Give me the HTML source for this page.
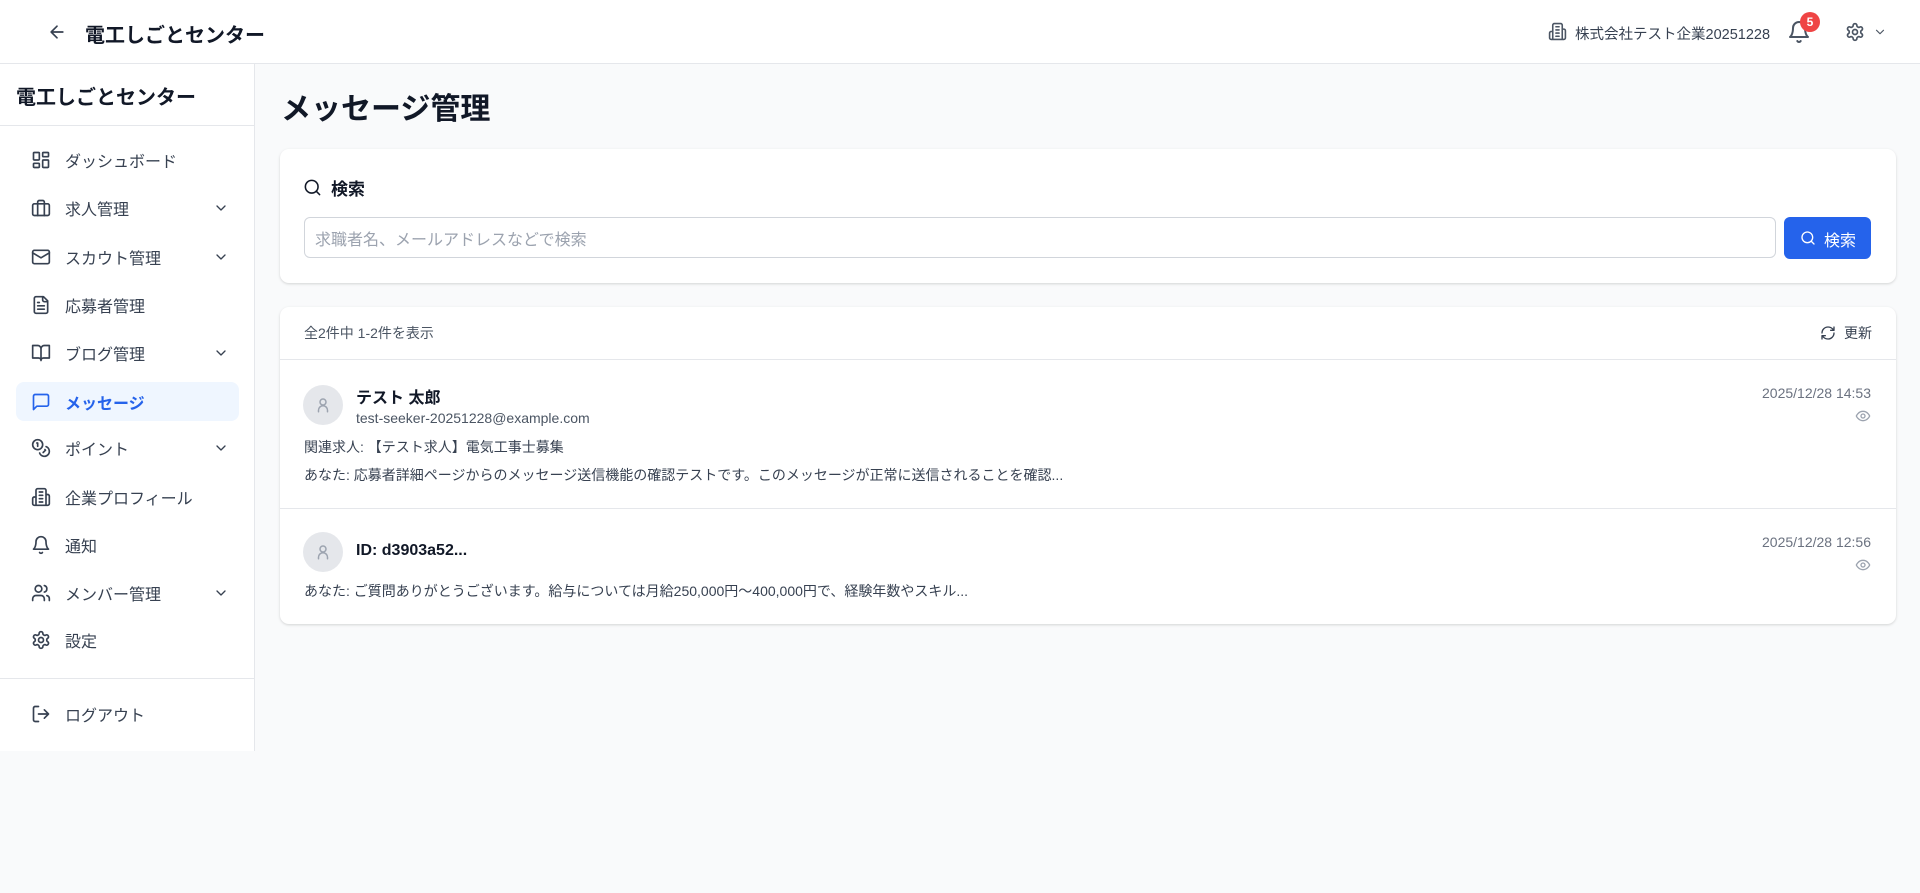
<!DOCTYPE html>
<html><head><meta charset="utf-8"><style>
*{box-sizing:border-box;margin:0;padding:0}
body{width:1920px;height:893px;background:#f9fafb;font-family:"Liberation Sans","Noto Sans CJK JP",sans-serif;color:#111827;position:relative;overflow:hidden}
.a{position:absolute}
svg{fill:none;stroke:currentColor;stroke-width:2;stroke-linecap:round;stroke-linejoin:round}
.hdr{left:0;top:0;width:1920px;height:64px;background:#fff;border-bottom:1px solid #e5e7eb}
.side{left:0;top:64px;width:255px;height:687px;background:#fff;border-right:1px solid #e5e7eb}
.nav{left:16px;width:223px;height:39px;display:flex;align-items:center;font-size:16px;color:#374151;border-radius:8px}
.nav svg{position:absolute;left:15px;width:20px;height:20px;color:#374151}
.nav span{position:absolute;left:49px}
.nav .ch{left:auto;right:10px;width:16px;height:16px}
.card{background:#fff;border-radius:9px;box-shadow:0 1px 3px rgba(0,0,0,.1),0 1px 2px rgba(0,0,0,.06)}
.av{width:40px;height:40px;border-radius:50%;background:#e5e7eb;display:flex;align-items:center;justify-content:center;color:#9ca3af}
.t14{font-size:14px;color:#374151;white-space:nowrap}
</style></head><body>
<div class="a hdr"></div>
<svg class="a" style="left:47px;top:22px;width:20px;height:20px;color:#374151" viewBox="0 0 24 24"><path d="M19 12H5M12 19l-7-7 7-7"/></svg>
<div class="a" style="left:85px;top:19px;font-size:20px;font-weight:700">電工しごとセンター</div>
<svg class="a" style="left:1548px;top:22px;width:19px;height:19px;color:#4b5563" viewBox="0 0 24 24"><path d="M6 22V4a2 2 0 0 1 2-2h8a2 2 0 0 1 2 2v18ZM6 12H4a2 2 0 0 0-2 2v6a2 2 0 0 0 2 2h2M18 9h2a2 2 0 0 1 2 2v9a2 2 0 0 1-2 2h-2M10 6h4M10 10h4M10 14h4M10 18h4"/></svg>
<div class="a" style="left:1575px;top:23px;font-size:14.5px;color:#374151">株式会社テスト企業20251228</div>
<svg class="a" style="left:1787px;top:20px;width:24px;height:24px;color:#4b5563" viewBox="0 0 24 24"><path d="M6 8a6 6 0 0 1 12 0c0 7 3 9 3 9H3s3-2 3-9M10.3 21a1.94 1.94 0 0 0 3.4 0"/></svg>
<div class="a" style="left:1800px;top:12px;width:20px;height:20px;border-radius:50%;background:#ef4444;color:#fff;font-size:12px;font-weight:700;text-align:center;line-height:20px">5</div>
<svg class="a" style="left:1845px;top:22px;width:20px;height:20px;color:#4b5563" viewBox="0 0 24 24"><path d="M12.22 2h-.44a2 2 0 0 0-2 2v.18a2 2 0 0 1-1 1.73l-.43.25a2 2 0 0 1-2 0l-.15-.08a2 2 0 0 0-2.73.73l-.22.38a2 2 0 0 0 .73 2.73l.15.1a2 2 0 0 1 1 1.72v.51a2 2 0 0 1-1 1.74l-.15.09a2 2 0 0 0-.73 2.73l.22.38a2 2 0 0 0 2.73.73l.15-.08a2 2 0 0 1 2 0l.43.25a2 2 0 0 1 1 1.73V20a2 2 0 0 0 2 2h.44a2 2 0 0 0 2-2v-.18a2 2 0 0 1 1-1.73l.43-.25a2 2 0 0 1 2 0l.15.08a2 2 0 0 0 2.73-.73l.22-.39a2 2 0 0 0-.73-2.73l-.15-.08a2 2 0 0 1-1-1.74v-.5a2 2 0 0 1 1-1.74l.15-.09a2 2 0 0 0 .73-2.73l-.22-.38a2 2 0 0 0-2.73-.73l-.15.08a2 2 0 0 1-2 0l-.43-.25a2 2 0 0 1-1-1.73V4a2 2 0 0 0-2-2z"/><circle cx="12" cy="12" r="3"/></svg>
<svg class="a" style="left:1873px;top:25px;width:14px;height:14px;color:#4b5563" viewBox="0 0 24 24"><path d="m6 9 6 6 6-6"/></svg>

<div class="a side"></div>
<div class="a" style="left:16px;top:81px;font-size:20px;font-weight:700">電工しごとセンター</div>
<div class="a" style="left:0;top:125px;width:255px;border-top:1px solid #e5e7eb"></div>

<div class="a nav" style="top:140px"><svg viewBox="0 0 24 24"><rect x="3" y="3" width="7" height="9" rx="1"/><rect x="14" y="3" width="7" height="5" rx="1"/><rect x="14" y="12" width="7" height="9" rx="1"/><rect x="3" y="16" width="7" height="5" rx="1"/></svg><span>ダッシュボード</span></div>
<div class="a nav" style="top:188px"><svg viewBox="0 0 24 24"><rect x="2" y="7" width="20" height="14" rx="2"/><path d="M16 21V5a2 2 0 0 0-2-2h-4a2 2 0 0 0-2 2v16"/></svg><span>求人管理</span><svg class="ch" viewBox="0 0 24 24"><path d="m6 9 6 6 6-6"/></svg></div>
<div class="a nav" style="top:237px"><svg viewBox="0 0 24 24"><rect x="2" y="4" width="20" height="16" rx="2"/><path d="m22 7-10 6L2 7"/></svg><span>スカウト管理</span><svg class="ch" viewBox="0 0 24 24"><path d="m6 9 6 6 6-6"/></svg></div>
<div class="a nav" style="top:285px"><svg viewBox="0 0 24 24"><path d="M15 2H6a2 2 0 0 0-2 2v16a2 2 0 0 0 2 2h12a2 2 0 0 0 2-2V7Z"/><path d="M14 2v4a2 2 0 0 0 2 2h4M10 9H8M16 13H8M16 17H8"/></svg><span>応募者管理</span></div>
<div class="a nav" style="top:333px"><svg viewBox="0 0 24 24"><path d="M2 3h6a4 4 0 0 1 4 4v14a3 3 0 0 0-3-3H2zM22 3h-6a4 4 0 0 0-4 4v14a3 3 0 0 1 3-3h7z"/></svg><span>ブログ管理</span><svg class="ch" viewBox="0 0 24 24"><path d="m6 9 6 6 6-6"/></svg></div>
<div class="a nav" style="top:382px;background:#eff6ff;color:#2563eb;font-weight:700"><svg viewBox="0 0 24 24" style="color:#2563eb"><path d="M21 15a2 2 0 0 1-2 2H7l-4 4V5a2 2 0 0 1 2-2h14a2 2 0 0 1 2 2z"/></svg><span>メッセージ</span></div>
<div class="a nav" style="top:428px"><svg viewBox="0 0 24 24"><circle cx="8" cy="8" r="6"/><path d="M18.09 10.37A6 6 0 1 1 10.34 18M7 6h1v4M16.71 13.88l.7.71-2.82 2.82"/></svg><span>ポイント</span><svg class="ch" viewBox="0 0 24 24"><path d="m6 9 6 6 6-6"/></svg></div>
<div class="a nav" style="top:477px"><svg viewBox="0 0 24 24"><path d="M6 22V4a2 2 0 0 1 2-2h8a2 2 0 0 1 2 2v18ZM6 12H4a2 2 0 0 0-2 2v6a2 2 0 0 0 2 2h2M18 9h2a2 2 0 0 1 2 2v9a2 2 0 0 1-2 2h-2M10 6h4M10 10h4M10 14h4M10 18h4"/></svg><span>企業プロフィール</span></div>
<div class="a nav" style="top:525px"><svg viewBox="0 0 24 24"><path d="M6 8a6 6 0 0 1 12 0c0 7 3 9 3 9H3s3-2 3-9M10.3 21a1.94 1.94 0 0 0 3.4 0"/></svg><span>通知</span></div>
<div class="a nav" style="top:573px"><svg viewBox="0 0 24 24"><path d="M16 21v-2a4 4 0 0 0-4-4H6a4 4 0 0 0-4 4v2"/><circle cx="9" cy="7" r="4"/><path d="M22 21v-2a4 4 0 0 0-3-3.87M16 3.13a4 4 0 0 1 0 7.75"/></svg><span>メンバー管理</span><svg class="ch" viewBox="0 0 24 24"><path d="m6 9 6 6 6-6"/></svg></div>
<div class="a nav" style="top:620px"><svg viewBox="0 0 24 24"><path d="M12.22 2h-.44a2 2 0 0 0-2 2v.18a2 2 0 0 1-1 1.73l-.43.25a2 2 0 0 1-2 0l-.15-.08a2 2 0 0 0-2.73.73l-.22.38a2 2 0 0 0 .73 2.73l.15.1a2 2 0 0 1 1 1.72v.51a2 2 0 0 1-1 1.74l-.15.09a2 2 0 0 0-.73 2.73l.22.38a2 2 0 0 0 2.73.73l.15-.08a2 2 0 0 1 2 0l.43.25a2 2 0 0 1 1 1.73V20a2 2 0 0 0 2 2h.44a2 2 0 0 0 2-2v-.18a2 2 0 0 1 1-1.73l.43-.25a2 2 0 0 1 2 0l.15.08a2 2 0 0 0 2.73-.73l.22-.39a2 2 0 0 0-.73-2.73l-.15-.08a2 2 0 0 1-1-1.74v-.5a2 2 0 0 1 1-1.74l.15-.09a2 2 0 0 0 .73-2.73l-.22-.38a2 2 0 0 0-2.73-.73l-.15.08a2 2 0 0 1-2 0l-.43-.25a2 2 0 0 1-1-1.73V4a2 2 0 0 0-2-2z"/><circle cx="12" cy="12" r="3"/></svg><span>設定</span></div>
<div class="a" style="left:0;top:678px;width:255px;border-top:1px solid #e5e7eb"></div>
<div class="a nav" style="top:694px"><svg viewBox="0 0 24 24"><path d="M9 21H5a2 2 0 0 1-2-2V5a2 2 0 0 1 2-2h4M16 17l5-5-5-5M21 12H9"/></svg><span>ログアウト</span></div>

<div class="a" style="left:281px;top:84px;font-size:30px;font-weight:700">メッセージ管理</div>

<div class="a card" style="left:280px;top:149px;width:1616px;height:134px"></div>
<svg class="a" style="left:303px;top:178px;width:19px;height:19px;color:#111827" viewBox="0 0 24 24"><circle cx="11" cy="11" r="8"/><path d="m21 21-4.3-4.3"/></svg>
<div class="a" style="left:331px;top:175px;font-size:17px;font-weight:700">検索</div>
<div class="a" style="left:304px;top:217px;width:1472px;height:41px;border:1px solid #d1d5db;border-radius:6px;font-size:16px;color:#9ca3af;padding:8px 10px;white-space:nowrap">求職者名、メールアドレスなどで検索</div>
<div class="a" style="left:1784px;top:217px;width:87px;height:42px;background:#2563eb;border-radius:6px;color:#fff;font-size:16px"><svg class="a" style="left:16px;top:13px;width:16px;height:16px;color:#fff" viewBox="0 0 24 24"><circle cx="11" cy="11" r="8"/><path d="m21 21-4.3-4.3"/></svg><span class="a" style="left:40px;top:10px">検索</span></div>

<div class="a card" style="left:280px;top:307px;width:1616px;height:317px"></div>
<div class="a t14" style="left:304px;top:323px;color:#4b5563">全2件中 1-2件を表示</div>
<svg class="a" style="left:1820px;top:325px;width:16px;height:16px;color:#374151" viewBox="0 0 24 24"><path d="M3 12a9 9 0 0 1 9-9 9.75 9.75 0 0 1 6.74 2.74L21 8M21 3v5h-5M21 12a9 9 0 0 1-9 9 9.75 9.75 0 0 1-6.74-2.74L3 16M8 16H3v5"/></svg>
<div class="a t14" style="left:1844px;top:323px">更新</div>
<div class="a" style="left:280px;top:359px;width:1616px;border-top:1px solid #e5e7eb"></div>

<div class="a av" style="left:303px;top:385px"><svg style="width:18px;height:18px" viewBox="0 0 24 24"><circle cx="12" cy="8" r="4"/><path d="M6 21v-2a6 6 0 0 1 12 0v2"/></svg></div>
<div class="a" style="left:356px;top:384px;font-size:16px;font-weight:700">テスト 太郎</div>
<div class="a t14" style="left:356px;top:410px;color:#4b5563">test-seeker-20251228@example.com</div>
<div class="a t14" style="left:304px;top:437px">関連求人: 【テスト求人】電気工事士募集</div>
<div class="a t14" style="left:304px;top:465px">あなた: 応募者詳細ページからのメッセージ送信機能の確認テストです。このメッセージが正常に送信されることを確認...</div>
<div class="a t14" style="right:49px;top:385px;color:#6b7280">2025/12/28 14:53</div>
<svg class="a" style="left:1855px;top:408px;width:16px;height:16px;color:#9ca3af" viewBox="0 0 24 24"><path d="M2 12s3-7 10-7 10 7 10 7-3 7-10 7-10-7-10-7Z"/><circle cx="12" cy="12" r="3"/></svg>
<div class="a" style="left:280px;top:508px;width:1616px;border-top:1px solid #e5e7eb"></div>

<div class="a av" style="left:303px;top:532px"><svg style="width:18px;height:18px" viewBox="0 0 24 24"><circle cx="12" cy="8" r="4"/><path d="M6 21v-2a6 6 0 0 1 12 0v2"/></svg></div>
<div class="a" style="left:356px;top:542px;font-size:16px;font-weight:700">ID: d3903a52...</div>
<div class="a t14" style="left:304px;top:581px">あなた: ご質問ありがとうございます。給与については月給250,000円〜400,000円で、経験年数やスキル...</div>
<div class="a t14" style="right:49px;top:534px;color:#6b7280">2025/12/28 12:56</div>
<svg class="a" style="left:1855px;top:557px;width:16px;height:16px;color:#9ca3af" viewBox="0 0 24 24"><path d="M2 12s3-7 10-7 10 7 10 7-3 7-10 7-10-7-10-7Z"/><circle cx="12" cy="12" r="3"/></svg>
</body></html>
